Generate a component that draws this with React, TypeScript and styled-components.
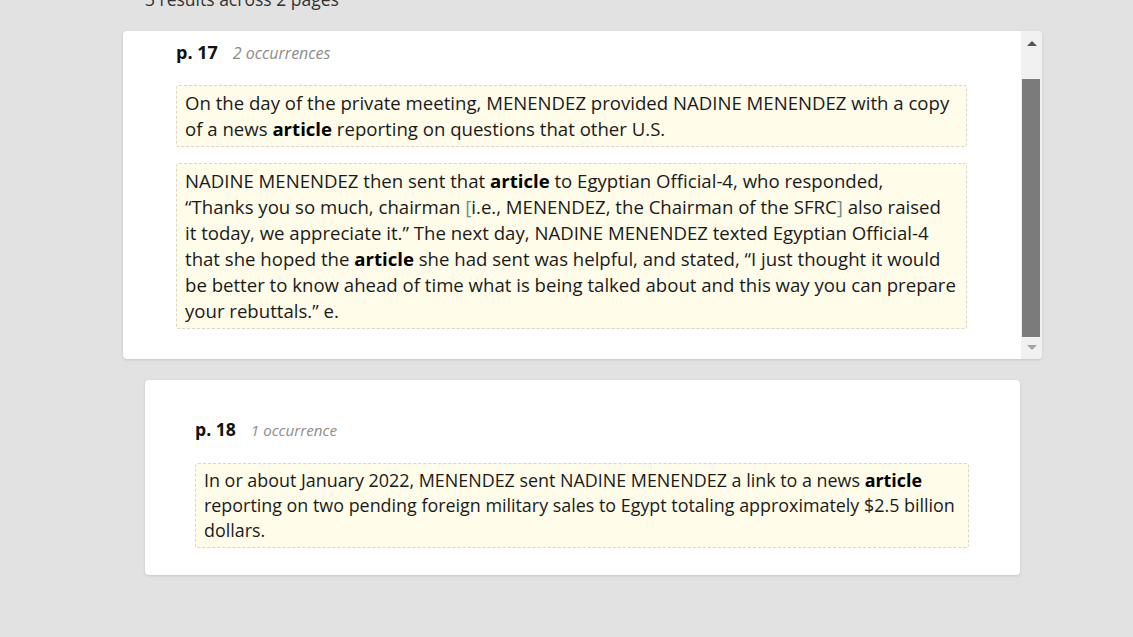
import React, { useLayoutEffect, useRef } from "react";
import styled, { createGlobalStyle } from "styled-components";

const GlobalStyle = createGlobalStyle`
  html, body {
    margin: 0;
    padding: 0;
    background: #e2e2e2;
    height: 100%;
    overflow: hidden;
  }
  body {
    font-family: "Open Sans", "Noto Sans", sans-serif;
    color: #1c1c1c;
  }
`;

const Page = styled.main`
  width: 875px;
  margin-left: 145px;
  display: flex;
  flex-direction: column;
`;

const Summary = styled.div`
  margin-top: -14px;
  margin-bottom: 19px;
  height: 26px;
  line-height: 26px;
  font-size: 17.5px;
  color: #333;
`;

const ScrollCard = styled.section`
  margin: 0 -22px 21px;
  height: 328px;
  display: flex;
  background: #fff;
  border-radius: 4px;
  box-shadow: 0 1px 3px rgba(0, 0, 0, 0.13);
  overflow: hidden;
`;

const Viewport = styled.div`
  flex: 1;
  overflow-y: scroll;
  overflow-x: hidden;
  scrollbar-width: none;
  &::-webkit-scrollbar {
    display: none;
  }
`;

const Scrollbar = styled.div`
  width: 21px;
  flex: none;
  display: flex;
  flex-direction: column;
  background: #f1f1f1;
`;

const ArrowButton = styled.div<{ $dir: "up" | "down" }>`
  height: 20px;
  flex: none;
  display: flex;
  justify-content: center;
  align-items: center;
  padding-left: 1px;

  &::after {
    content: "";
    width: 0;
    height: 0;
    border-left: 5px solid transparent;
    border-right: 5px solid transparent;
    ${(p) =>
      p.$dir === "up"
        ? "border-bottom: 5px solid #545454; margin-top: 4px;"
        : "border-top: 5px solid #a4a4a4; margin-bottom: 4px;"}
  }
`;

const Track = styled.div`
  flex: 1;
  display: flex;
  padding: 28px 2px 2px 1px;
`;

const Thumb = styled.div`
  flex: 1;
  background: #7b7b7b;
`;

const Card = styled.section`
  background: #fff;
  border-radius: 4px;
  box-shadow: 0 1px 3px rgba(0, 0, 0, 0.13);
`;

const CardBody = styled.div<{ $large?: boolean }>`
  --text-size: ${(p) => (p.$large ? "18.6px" : "17.9px")};
  --text-line: ${(p) => (p.$large ? "26px" : "25px")};
  --page-size: ${(p) => (p.$large ? "18px" : "17.6px")};
  --count-size: ${(p) => (p.$large ? "16px" : "15.2px")};
  --head-gap: ${(p) => (p.$large ? "20px" : "21px")};
  padding: ${(p) => (p.$large ? "45px 54px 32px 53px" : "36px 51px 27px 50px")};
  display: flex;
  flex-direction: column;
`;

const PageHeader = styled.div`
  display: flex;
  align-items: baseline;
  gap: 15px;
  height: 26px;
  line-height: 26px;
  margin-bottom: var(--head-gap);
`;

const PageNo = styled.span`
  font-size: var(--page-size);
  font-weight: 700;
  color: #111;
`;

const Count = styled.span`
  font-size: var(--count-size);
  font-style: italic;
  color: #8c8c8c;
`;

const SnippetList = styled.div`
  display: flex;
  flex-direction: column;
  gap: 16px;
`;

const Snippet = styled.p`
  margin: 0;
  padding: 4px 8px;
  border: 1px dashed #dad7c9;
  border-radius: 3px;
  background: #fffcea;
  font-size: var(--text-size);
  line-height: var(--text-line);
  white-space: nowrap;
  color: #1a1a1a;
`;

const Hit = styled.b`
  font-weight: 700;
  color: #000;
`;

const Bracket = styled.span`
  color: #6f8f8f;
`;

function ResultHeader({ page, count }: { page: number; count: string }) {
  return (
    <PageHeader>
      <PageNo>p. {page}</PageNo>
      <Count>{count}</Count>
    </PageHeader>
  );
}

export default function App() {
  const scrollRef = useRef<HTMLDivElement>(null);
  useLayoutEffect(() => {
    if (scrollRef.current) scrollRef.current.scrollTop = 37;
  }, []);

  return (
    <>
      <GlobalStyle />
      <Page>
        <Summary>3 results across 2 pages</Summary>

        <ScrollCard>
          <Viewport ref={scrollRef}>
            <CardBody $large>
              <ResultHeader page={17} count="2 occurrences" />
              <SnippetList>
                <Snippet>
                  On the day of the private meeting, MENENDEZ provided NADINE MENENDEZ with a copy
                  <br />
                  of a news <Hit>article</Hit> reporting on questions that other U.S.
                </Snippet>
                <Snippet>
                  NADINE MENENDEZ then sent that <Hit>article</Hit> to Egyptian Official-4, who responded,
                  <br />
                  “Thanks you so much, chairman <Bracket>[</Bracket>i.e., MENENDEZ, the Chairman of the SFRC
                  <Bracket>]</Bracket> also raised
                  <br />
                  it today, we appreciate it.” The next day, NADINE MENENDEZ texted Egyptian Official-4
                  <br />
                  that she hoped the <Hit>article</Hit> she had sent was helpful, and stated, “I just thought it would
                  <br />
                  be better to know ahead of time what is being talked about and this way you can prepare
                  <br />
                  your rebuttals.” e.
                </Snippet>
              </SnippetList>
            </CardBody>
          </Viewport>
          <Scrollbar aria-hidden="true">
            <ArrowButton $dir="up" />
            <Track>
              <Thumb />
            </Track>
            <ArrowButton $dir="down" />
          </Scrollbar>
        </ScrollCard>

        <Card>
          <CardBody>
            <ResultHeader page={18} count="1 occurrence" />
            <SnippetList>
              <Snippet>
                In or about January 2022, MENENDEZ sent NADINE MENENDEZ a link to a news <Hit>article</Hit>
                <br />
                reporting on two pending foreign military sales to Egypt totaling approximately $2.5 billion
                <br />
                dollars.
              </Snippet>
            </SnippetList>
          </CardBody>
        </Card>
      </Page>
    </>
  );
}
